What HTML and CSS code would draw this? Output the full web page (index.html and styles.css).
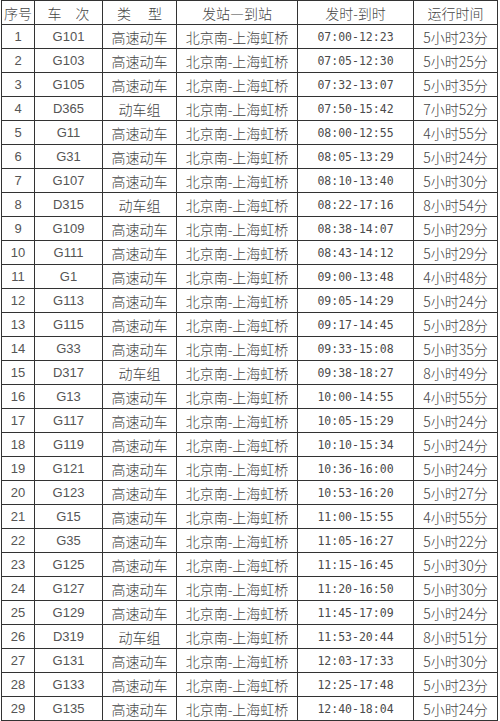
FILE: index.html
```html
<!DOCTYPE html>
<html lang="zh">
<head>
<meta charset="utf-8">
<title>北京南-上海虹桥 时刻表</title>
<link rel="stylesheet" href="styles.css">
</head>
<body>
<table class="sched">
<colgroup>
<col class="c1"><col class="c2"><col class="c3"><col class="c4"><col class="c5"><col class="c6">
</colgroup>
<thead>
<tr><th>序号</th><th><span class="sp">车</span><span>次</span></th><th><span class="sp2">类</span><span>型</span></th><th>发站—到站</th><th>发时-到时</th><th>运行时间</th></tr>
</thead>
<tbody>
<tr><td class="n">1</td><td class="n">G101</td><td>高速动车</td><td>北京南-上海虹桥</td><td class="t">07:00-12:23</td><td class="d">5小时23分</td></tr>
<tr><td class="n">2</td><td class="n">G103</td><td>高速动车</td><td>北京南-上海虹桥</td><td class="t">07:05-12:30</td><td class="d">5小时25分</td></tr>
<tr><td class="n">3</td><td class="n">G105</td><td>高速动车</td><td>北京南-上海虹桥</td><td class="t">07:32-13:07</td><td class="d">5小时35分</td></tr>
<tr><td class="n">4</td><td class="n">D365</td><td>动车组</td><td>北京南-上海虹桥</td><td class="t">07:50-15:42</td><td class="d">7小时52分</td></tr>
<tr><td class="n">5</td><td class="n">G11</td><td>高速动车</td><td>北京南-上海虹桥</td><td class="t">08:00-12:55</td><td class="d">4小时55分</td></tr>
<tr><td class="n">6</td><td class="n">G31</td><td>高速动车</td><td>北京南-上海虹桥</td><td class="t">08:05-13:29</td><td class="d">5小时24分</td></tr>
<tr><td class="n">7</td><td class="n">G107</td><td>高速动车</td><td>北京南-上海虹桥</td><td class="t">08:10-13:40</td><td class="d">5小时30分</td></tr>
<tr><td class="n">8</td><td class="n">D315</td><td>动车组</td><td>北京南-上海虹桥</td><td class="t">08:22-17:16</td><td class="d">8小时54分</td></tr>
<tr><td class="n">9</td><td class="n">G109</td><td>高速动车</td><td>北京南-上海虹桥</td><td class="t">08:38-14:07</td><td class="d">5小时29分</td></tr>
<tr><td class="n">10</td><td class="n">G111</td><td>高速动车</td><td>北京南-上海虹桥</td><td class="t">08:43-14:12</td><td class="d">5小时29分</td></tr>
<tr><td class="n">11</td><td class="n">G1</td><td>高速动车</td><td>北京南-上海虹桥</td><td class="t">09:00-13:48</td><td class="d">4小时48分</td></tr>
<tr><td class="n">12</td><td class="n">G113</td><td>高速动车</td><td>北京南-上海虹桥</td><td class="t">09:05-14:29</td><td class="d">5小时24分</td></tr>
<tr><td class="n">13</td><td class="n">G115</td><td>高速动车</td><td>北京南-上海虹桥</td><td class="t">09:17-14:45</td><td class="d">5小时28分</td></tr>
<tr><td class="n">14</td><td class="n">G33</td><td>高速动车</td><td>北京南-上海虹桥</td><td class="t">09:33-15:08</td><td class="d">5小时35分</td></tr>
<tr><td class="n">15</td><td class="n">D317</td><td>动车组</td><td>北京南-上海虹桥</td><td class="t">09:38-18:27</td><td class="d">8小时49分</td></tr>
<tr><td class="n">16</td><td class="n">G13</td><td>高速动车</td><td>北京南-上海虹桥</td><td class="t">10:00-14:55</td><td class="d">4小时55分</td></tr>
<tr><td class="n">17</td><td class="n">G117</td><td>高速动车</td><td>北京南-上海虹桥</td><td class="t">10:05-15:29</td><td class="d">5小时24分</td></tr>
<tr><td class="n">18</td><td class="n">G119</td><td>高速动车</td><td>北京南-上海虹桥</td><td class="t">10:10-15:34</td><td class="d">5小时24分</td></tr>
<tr><td class="n">19</td><td class="n">G121</td><td>高速动车</td><td>北京南-上海虹桥</td><td class="t">10:36-16:00</td><td class="d">5小时24分</td></tr>
<tr><td class="n">20</td><td class="n">G123</td><td>高速动车</td><td>北京南-上海虹桥</td><td class="t">10:53-16:20</td><td class="d">5小时27分</td></tr>
<tr><td class="n">21</td><td class="n">G15</td><td>高速动车</td><td>北京南-上海虹桥</td><td class="t">11:00-15:55</td><td class="d">4小时55分</td></tr>
<tr><td class="n">22</td><td class="n">G35</td><td>高速动车</td><td>北京南-上海虹桥</td><td class="t">11:05-16:27</td><td class="d">5小时22分</td></tr>
<tr><td class="n">23</td><td class="n">G125</td><td>高速动车</td><td>北京南-上海虹桥</td><td class="t">11:15-16:45</td><td class="d">5小时30分</td></tr>
<tr><td class="n">24</td><td class="n">G127</td><td>高速动车</td><td>北京南-上海虹桥</td><td class="t">11:20-16:50</td><td class="d">5小时30分</td></tr>
<tr><td class="n">25</td><td class="n">G129</td><td>高速动车</td><td>北京南-上海虹桥</td><td class="t">11:45-17:09</td><td class="d">5小时24分</td></tr>
<tr><td class="n">26</td><td class="n">D319</td><td>动车组</td><td>北京南-上海虹桥</td><td class="t">11:53-20:44</td><td class="d">8小时51分</td></tr>
<tr><td class="n">27</td><td class="n">G131</td><td>高速动车</td><td>北京南-上海虹桥</td><td class="t">12:03-17:33</td><td class="d">5小时30分</td></tr>
<tr><td class="n">28</td><td class="n">G133</td><td>高速动车</td><td>北京南-上海虹桥</td><td class="t">12:25-17:48</td><td class="d">5小时23分</td></tr>
<tr><td class="n">29</td><td class="n">G135</td><td>高速动车</td><td>北京南-上海虹桥</td><td class="t">12:40-18:04</td><td class="d">5小时24分</td></tr>
</tbody>
</table>
</body>
</html>
```
FILE: styles.css
```css
html, body {
  margin: 0;
  padding: 0;
  background: #ffffff;
}
body {
  font-family: "Noto Sans CJK SC", "Noto Sans", sans-serif;
  color: #444444;
}
.sched {
  border-collapse: collapse;
  table-layout: fixed;
  width: 497px;
  margin-left: 1px;
}
.c1 { width: 33px; }
.c2 { width: 68px; }
.c3 { width: 74px; }
.c4 { width: 121px; }
.c5 { width: 116px; }
.c6 { width: 84px; }
.sched th, .sched td {
  border: 1px solid #333333;
  height: 23px;
  padding: 0;
  text-align: center;
  vertical-align: middle;
  font-size: 14px;
  font-weight: 300;
  line-height: 16px;
  white-space: nowrap;
  overflow: hidden;
}
.sched th {
  font-weight: 300;
}
.sp { margin-right: 14px; }
.sp2 { margin-right: 17px; }
.sched td.n {
  font-family: "Liberation Sans", sans-serif;
  font-size: 13px;
  font-weight: 400;
  color: #555555;
}
.sched td.t {
  font-family: "DejaVu Sans Mono", monospace;
  font-size: 11.5px;
  font-weight: 400;
  color: #4a4a4a;
}
.sched td.d {
  font-size: 14px;
}
```
